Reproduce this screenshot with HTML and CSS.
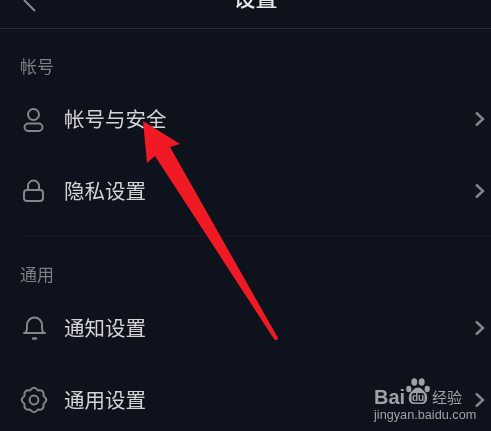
FILE: index.html
```html
<!DOCTYPE html>
<html lang="zh-CN">
<head>
    <meta charset="UTF-8">
    <meta name="viewport" content="width=device-width, initial-scale=1.0">
    <title>设置</title>
    <link rel="stylesheet" href="styles.css">
</head>
<body>
    <div class="app-container">
        <div class="header">
            <svg class="back-icon" width="20" height="20" viewBox="0 0 20 20">
                <path d="M2 -2 L13 9" />
            </svg>
            <div class="title">设置</div>
        </div>

        <div class="section">
            <div class="section-label">帐号</div>
            <div class="row">
                <svg class="row-icon" width="28" height="28" viewBox="0 0 28 28">
                    <circle cx="13.5" cy="9.5" r="5.5" />
                    <rect x="4.5" y="18.5" width="18" height="7.5" rx="3.75" />
                </svg>
                <div class="row-text">帐号与安全</div>
                <svg class="chevron" width="12" height="16" viewBox="0 0 12 16">
                    <path d="M3 1.5 L10 8 L3 14.5" />
                </svg>
            </div>
            <div class="row">
                <svg class="row-icon" width="28" height="28" viewBox="0 0 28 28">
                    <rect x="4" y="13" width="19" height="11" rx="3" />
                    <path d="M8 13 V9 a5.5 5.5 0 0 1 11 0 V13" />
                </svg>
                <div class="row-text">隐私设置</div>
                <svg class="chevron" width="12" height="16" viewBox="0 0 12 16">
                    <path d="M3 1.5 L10 8 L3 14.5" />
                </svg>
            </div>
        </div>

        <div class="section section-split">
            <div class="section-label">通用</div>
            <div class="row">
                <svg class="row-icon" width="28" height="28" viewBox="0 0 28 28">
                    <path d="M4 19 Q7 18.5 7 14 V11 a7.5 7.5 0 0 1 15 0 V14 Q22 18.5 25 19 Z" />
                    <path class="clapper" d="M13 24.5 H16" />
                </svg>
                <div class="row-text">通知设置</div>
                <svg class="chevron" width="12" height="16" viewBox="0 0 12 16">
                    <path d="M3 1.5 L10 8 L3 14.5" />
                </svg>
            </div>
            <div class="row">
                <svg class="row-icon" width="28" height="28" viewBox="0 0 28 28">
                    <path d="M17.94 4.48 Q24.6 3.4 23.52 10.06 Q29 14 23.52 17.94 Q24.6 24.6 17.94 23.52 Q14 29 10.06 23.52 Q3.4 24.6 4.48 17.94 Q-1 14 4.48 10.06 Q3.4 3.4 10.06 4.48 Q14 -1 17.94 4.48 Z" />
                    <circle cx="14" cy="14" r="4.4" />
                </svg>
                <div class="row-text">通用设置</div>
                <svg class="chevron" width="12" height="16" viewBox="0 0 12 16">
                    <path d="M3 1.5 L10 8 L3 14.5" />
                </svg>
            </div>
        </div>

        <!-- red arrow drawn on top of the screenshot -->
        <svg class="arrow" width="491" height="431" viewBox="0 0 491 431">
            <path d="M143 121 L180 144 L170 147 L278 338 Q277 342 274 339 L155 156 L147 163 Z" />
        </svg>

        <div class="watermark">
            <div class="wm-top">
                <span class="wm-bai">Bai</span>
                <svg class="wm-paw" width="26" height="28" viewBox="0 0 26 28">
                    <ellipse cx="9.3" cy="4" rx="3" ry="3.8" />
                    <ellipse cx="16.7" cy="4" rx="3" ry="3.8" />
                    <ellipse cx="3.8" cy="11" rx="2.6" ry="3.2" />
                    <ellipse cx="22.2" cy="11" rx="2.6" ry="3.2" />
                    <path d="M13 9.5 C17 9.5 18 13 21 15 C23 19 23 26 17 26 H9 C3 26 3 19 5 15 C8 13 9 9.5 13 9.5 Z" />
                    <rect class="wm-du-bg" x="6.5" y="15" width="13" height="9.5" rx="3" />
                    <text x="13" y="23" class="wm-du">du</text>
                </svg>
                <span class="wm-cn">经验</span>
            </div>
            <div class="wm-url">jingyan.baidu.com</div>
        </div>
    </div>
</body>
</html>
```

FILE: styles.css
```css
* {
    margin: 0;
    padding: 0;
    box-sizing: border-box;
    font-family: "Liberation Sans", "Noto Sans CJK SC", sans-serif;
}

html, body {
    width: 491px;
    height: 431px;
    overflow: hidden;
    background: #0e121c;
}

.app-container {
    width: 491px;
    height: 431px;
    overflow: hidden;
    position: relative;
    background: #0e121c;
    filter: blur(0.4px);
}

.header {
    height: 29px;
    border-bottom: 1px solid #2a2d37;
    display: flex;
    justify-content: center;
    align-items: flex-end;
    padding: 0 0 17px 20px;
    position: relative;
}

.title {
    font-size: 22px;
    line-height: 24px;
    font-weight: 500;
    color: #e6e6e8;
    flex: none;
}

.back-icon {
    position: absolute;
    left: 22px;
    top: 2px;
    overflow: visible;
}

.back-icon path {
    fill: none;
    stroke: #8b8c91;
    stroke-width: 2;
}

.section {
    padding-top: 26px;
}

.section-split {
    margin: 9px 0 0 20px;
    border-top: 1px solid #181b25;
}

.section-label {
    font-size: 17px;
    line-height: 24px;
    color: #7d7f85;
    margin: 1px 0 3px 20px;
}

.section-split .section-label {
    margin: 1px 0 4px 0;
}

.row {
    height: 72px;
    display: flex;
    align-items: center;
    padding: 0 6px 0 20px;
}

.section-split .row {
    padding-left: 0;
}

.row-icon {
    width: 28px;
    height: 28px;
    margin-right: 16px;
    flex: none;
    overflow: visible;
}

.row-icon circle,
.row-icon rect,
.row-icon path {
    fill: none;
    stroke: #85868c;
    stroke-width: 2;
    stroke-linejoin: round;
    stroke-linecap: round;
}

.row-icon .clapper {
    stroke-width: 2.4;
}

.row-text {
    flex: 1;
    font-size: 20.5px;
    line-height: 28px;
    color: #d4d4d6;
    padding-top: 2px;
}

.chevron {
    flex: none;
}

.chevron path {
    fill: none;
    stroke: #85868c;
    stroke-width: 2.4;
}

.arrow {
    position: absolute;
    left: 0;
    top: 0;
}

.arrow path {
    fill: #ef1a24;
}

.watermark {
    position: absolute;
    left: 374px;
    top: 378px;
    width: 92px;
    color: #a0a1a5;
}

.wm-top {
    display: flex;
    align-items: flex-end;
    height: 28px;
}

.wm-bai {
    font-size: 20px;
    line-height: 18px;
    font-weight: 700;
    width: 31px;
}

.wm-paw {
    flex: none;
    fill: #a0a1a5;
}

.wm-du-bg {
    fill: #0e121c;
}

.wm-du {
    font-size: 10px;
    font-weight: 700;
    fill: #a0a1a5;
    text-anchor: middle;
}

.wm-cn {
    font-size: 15px;
    line-height: 17px;
    margin-left: 1px;
}

.wm-url {
    font-size: 12.7px;
    line-height: 14px;
    margin-top: 2px;
    white-space: nowrap;
}
```
